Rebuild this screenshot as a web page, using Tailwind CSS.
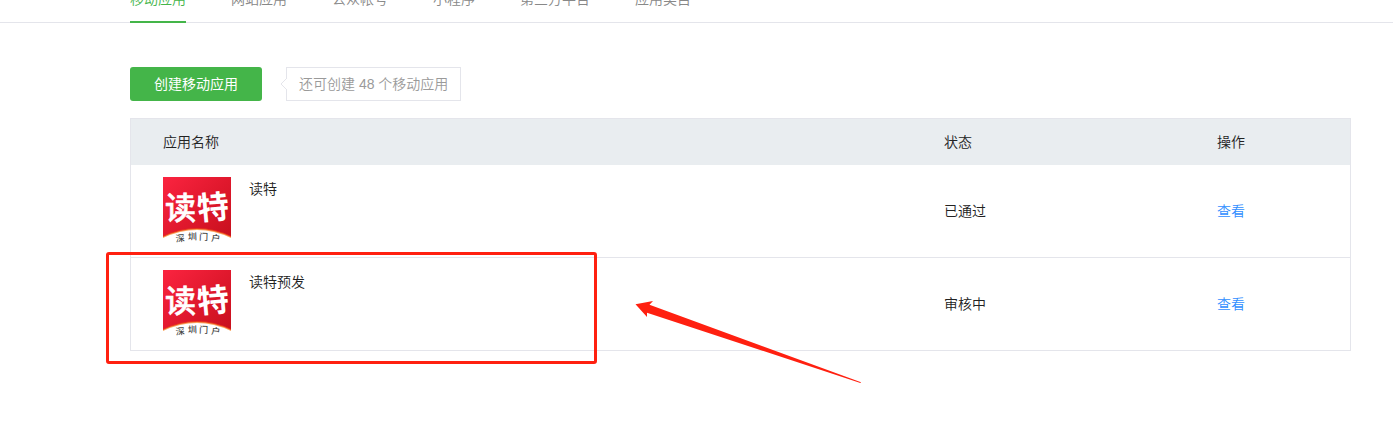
<!DOCTYPE html>
<html lang="zh-CN">
<head>
    <meta charset="UTF-8">
    <meta name="viewport" content="width=device-width, initial-scale=1.0">
    <title>移动应用</title>
    <script src="https://cdn.jsdelivr.net/npm/@tailwindcss/browser@4"></script>
</head>
<body class="bg-white text-sm font-[350] text-[#222] font-['Liberation_Sans','Noto_Sans_CJK_SC',sans-serif] overflow-hidden">
    <!-- Shared app logo -->
    <svg class="absolute size-0" aria-hidden="true">
        <defs>
            <linearGradient id="logo-red" x1="0" y1="0" x2="1" y2="1">
                <stop offset="0" stop-color="#fb2440"/>
                <stop offset="0.5" stop-color="#e0182d"/>
                <stop offset="1" stop-color="#c40f1b"/>
            </linearGradient>
            <symbol id="logo" viewBox="0 0 68 68">
                <rect width="68" height="68" fill="url(#logo-red)"/>
                <path d="M0 59Q34 43 68 59V68H0Z" fill="#ea3a1c"/>
                <path d="M0 60Q34 44 68 60V68H0Z" fill="#f9a45c"/>
                <path d="M0 61Q34 45 68 61V68H0Z" fill="#fff"/>
                <text x="2" y="42" fill="#fff" font-size="31" font-weight="500" stroke="#fff" stroke-width="0.6">读</text>
                <text x="34" y="42" fill="#fff" font-size="32" font-weight="700" transform="rotate(-5 50 32)">特</text>
                <text x="13 25 36 48" y="65 63 63 64" rotate="-6 -2 2 6" fill="#444" font-size="9" font-weight="500">深圳门户</text>
            </symbol>
        </defs>
    </svg>

    <header class="-mt-[11px] border-b border-[#e4e5eb] pl-[130px] pr-[42px]">
        <nav class="-mb-px flex gap-[45px] leading-5 text-[#888]">
            <a href="#" class="border-b-2 border-[#44b549] pb-3 text-[#44b549]">移动应用</a>
            <a href="#" class="pb-3">网站应用</a>
            <a href="#" class="pb-3">公众帐号</a>
            <a href="#" class="pb-3">小程序</a>
            <a href="#" class="pb-3">第三方平台</a>
            <a href="#" class="pb-3">应用类目</a>
        </nav>
    </header>

    <main class="pt-11 pb-20 pl-[130px] pr-[42px]">
        <div class="flex gap-6">
            <button type="button" class="h-[34px] w-[132px] rounded-[3px] bg-[#44b549] font-normal text-white">创建移动应用</button>
            <div class="relative flex h-[34px] items-center border border-[#e4e5eb] px-3 text-[#9a9a9a]">
                <svg class="absolute -left-[7px] top-[9px] h-[14px] w-[7px]" viewBox="0 0 7 14">
                    <path d="M7 1L1 7L7 13" fill="#fff" stroke="#e4e5eb"/>
                </svg>
                还可创建 48 个移动应用
            </div>
        </div>

        <div class="relative mt-[17px]">
            <div class="border border-[#e4e5eb]">
                <table class="w-full table-fixed text-left">
                    <colgroup>
                        <col>
                        <col class="w-[273px]">
                        <col class="w-[165px]">
                    </colgroup>
                    <thead class="bg-[#e9edf0]">
                        <tr class="h-[46px]">
                            <th class="pl-8 font-[350]">应用名称</th>
                            <th class="pl-8 font-[350]">状态</th>
                            <th class="pl-8 font-[350]">操作</th>
                        </tr>
                    </thead>
                    <tbody>
                        <tr>
                            <td class="py-3 pl-8">
                                <div class="flex gap-[18px]">
                                    <svg class="size-[68px]"><use href="#logo"/></svg>
                                    <span class="leading-6">读特</span>
                                </div>
                            </td>
                            <td class="pl-8">已通过</td>
                            <td class="pl-8"><a href="#" class="text-[#308eff]">查看</a></td>
                        </tr>
                        <tr class="border-t border-[#e4e5eb]">
                            <td class="py-3 pl-8">
                                <div class="flex gap-[18px]">
                                    <svg class="size-[68px]"><use href="#logo"/></svg>
                                    <span class="leading-6">读特预发</span>
                                </div>
                            </td>
                            <td class="pl-8">审核中</td>
                            <td class="pl-8"><a href="#" class="text-[#308eff]">查看</a></td>
                        </tr>
                    </tbody>
                </table>
            </div>

            <!-- Highlight box and arrow over the second row -->
            <div class="pointer-events-none absolute -left-6 top-[134px] h-[112px] w-[491px] rounded-[3px] border-3 border-[#ff2010]"></div>
            <svg class="pointer-events-none absolute left-[505px] top-[182px] h-[84px] w-[228px]" viewBox="0 0 228 84">
                <path d="M0.5 4.3L18 1L14.5 4.8L226 82.2L225.4 83L12 12.7V17Z" fill="#ff2010"/>
            </svg>
        </div>
    </main>
</body>
</html>
